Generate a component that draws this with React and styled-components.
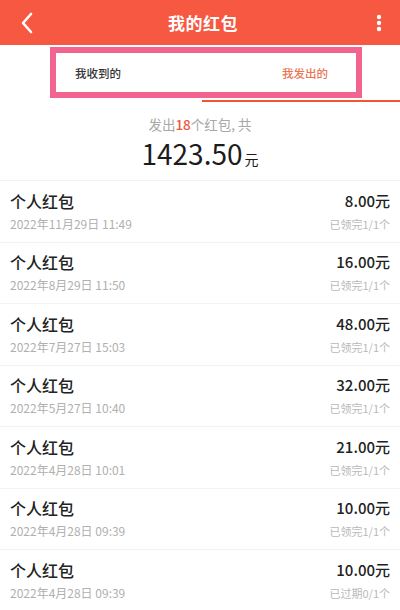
import React from 'react';
import styled, { createGlobalStyle } from 'styled-components';

const GlobalStyle = createGlobalStyle`
  * {
    box-sizing: border-box;
  }
  body {
    margin: 0;
    background: #fff;
    font-family: "Noto Sans CJK SC", "Noto Sans", sans-serif;
  }
`;

const Page = styled.div`
  width: 400px;
  height: 610px;
  overflow: hidden;
  background: #fff;
`;

const Header = styled.header`
  height: 45px;
  background: #f65842;
  display: flex;
  align-items: center;
  justify-content: space-between;
  padding: 0 10px 0 16px;
  color: #fff;
`;

const Title = styled.h1`
  margin: 0;
  font-size: 17px;
  font-weight: 700;
  letter-spacing: 0.5px;
`;

const HeaderIcon = styled.div`
  width: 22px;
  display: flex;
  justify-content: center;
`;

const Tabs = styled.div`
  padding-top: 2px;
  height: 57px;
`;

const TabBox = styled.div`
  margin-left: 50px;
  width: 312px;
  height: 51px;
  border: 6px solid #f2648f;
  display: flex;
  align-items: center;
  justify-content: space-between;
  padding: 0 28px 0 19px;
`;

const Tab = styled.span`
  font-size: 11.5px;
  font-weight: 500;
  color: ${({ active }) => (active ? '#ea7654' : '#333')};
`;

const Indicator = styled.div`
  margin: 2px 0 0 202px;
  height: 2px;
  background: #f2552f;
`;

const Summary = styled.section`
  display: flex;
  flex-direction: column;
  align-items: center;
  padding-top: 12px;
  height: 79px;
  border-bottom: 1px solid #f3f3f3;
`;

const SummaryText = styled.div`
  font-size: 13.5px;
  color: #a8a8a8;
  line-height: 20px;
  b {
    color: #f2553e;
    font-weight: 500;
  }
`;

const Total = styled.div`
  margin-top: 4px;
  font-size: 28px;
  line-height: 30px;
  color: #1c1c1c;
  small {
    font-size: 14px;
    margin-left: 2px;
  }
`;

const Row = styled.div`
  height: 61.5px;
  border-bottom: 1px solid #f3f3f3;
  padding: 0 10px;
  display: flex;
  justify-content: space-between;
  align-items: center;
`;

const Col = styled.div`
  display: flex;
  flex-direction: column;
  align-items: ${({ right }) => (right ? 'flex-end' : 'flex-start')};
  gap: 3px;
`;

const Name = styled.div`
  font-size: 16px;
  line-height: 22px;
  color: #222;
  font-weight: 500;
`;

const Amount = styled.div`
  font-size: 15px;
  line-height: 22px;
  color: #222;
  font-weight: 500;
`;

const Meta = styled.div`
  line-height: 18px;
  color: ${({ small }) => (small ? '#b9b9b9' : '#b0b0b0')};
  font-size: ${({ small }) => (small ? '11px' : '12px')};
`;

const records = [
  ['2022年11月29日 11:49', '8.00', '已领完1/1个'],
  ['2022年8月29日 11:50', '16.00', '已领完1/1个'],
  ['2022年7月27日 15:03', '48.00', '已领完1/1个'],
  ['2022年5月27日 10:40', '32.00', '已领完1/1个'],
  ['2022年4月28日 10:01', '21.00', '已领完1/1个'],
  ['2022年4月28日 09:39', '10.00', '已领完1/1个'],
  ['2022年4月28日 09:39', '10.00', '已过期0/1个'],
];

export default function App() {
  return (
    <Page>
      <GlobalStyle />
      <Header>
        <HeaderIcon>
          <svg width="14" height="22" viewBox="0 0 14 22">
            <path d="M11 2 L3 11 L11 20" fill="none" stroke="#fff" strokeWidth="2.6" strokeLinecap="round" strokeLinejoin="round" />
          </svg>
        </HeaderIcon>
        <Title>我的红包</Title>
        <HeaderIcon>
          <svg width="6" height="18" viewBox="0 0 6 18">
            <circle cx="3" cy="3" r="2.2" fill="#fff" />
            <circle cx="3" cy="9" r="2.2" fill="#fff" />
            <circle cx="3" cy="15" r="2.2" fill="#fff" />
          </svg>
        </HeaderIcon>
      </Header>
      <Tabs>
        <TabBox>
          <Tab>我收到的</Tab>
          <Tab active>我发出的</Tab>
        </TabBox>
        <Indicator />
      </Tabs>
      <Summary>
        <SummaryText>发出<b>18</b>个红包, 共</SummaryText>
        <Total>1423.50<small>元</small></Total>
      </Summary>
      {records.map(([date, amount, status], i) => (
        <Row key={i}>
          <Col>
            <Name>个人红包</Name>
            <Meta>{date}</Meta>
          </Col>
          <Col right>
            <Amount>{amount}元</Amount>
            <Meta small>{status}</Meta>
          </Col>
        </Row>
      ))}
    </Page>
  );
}
